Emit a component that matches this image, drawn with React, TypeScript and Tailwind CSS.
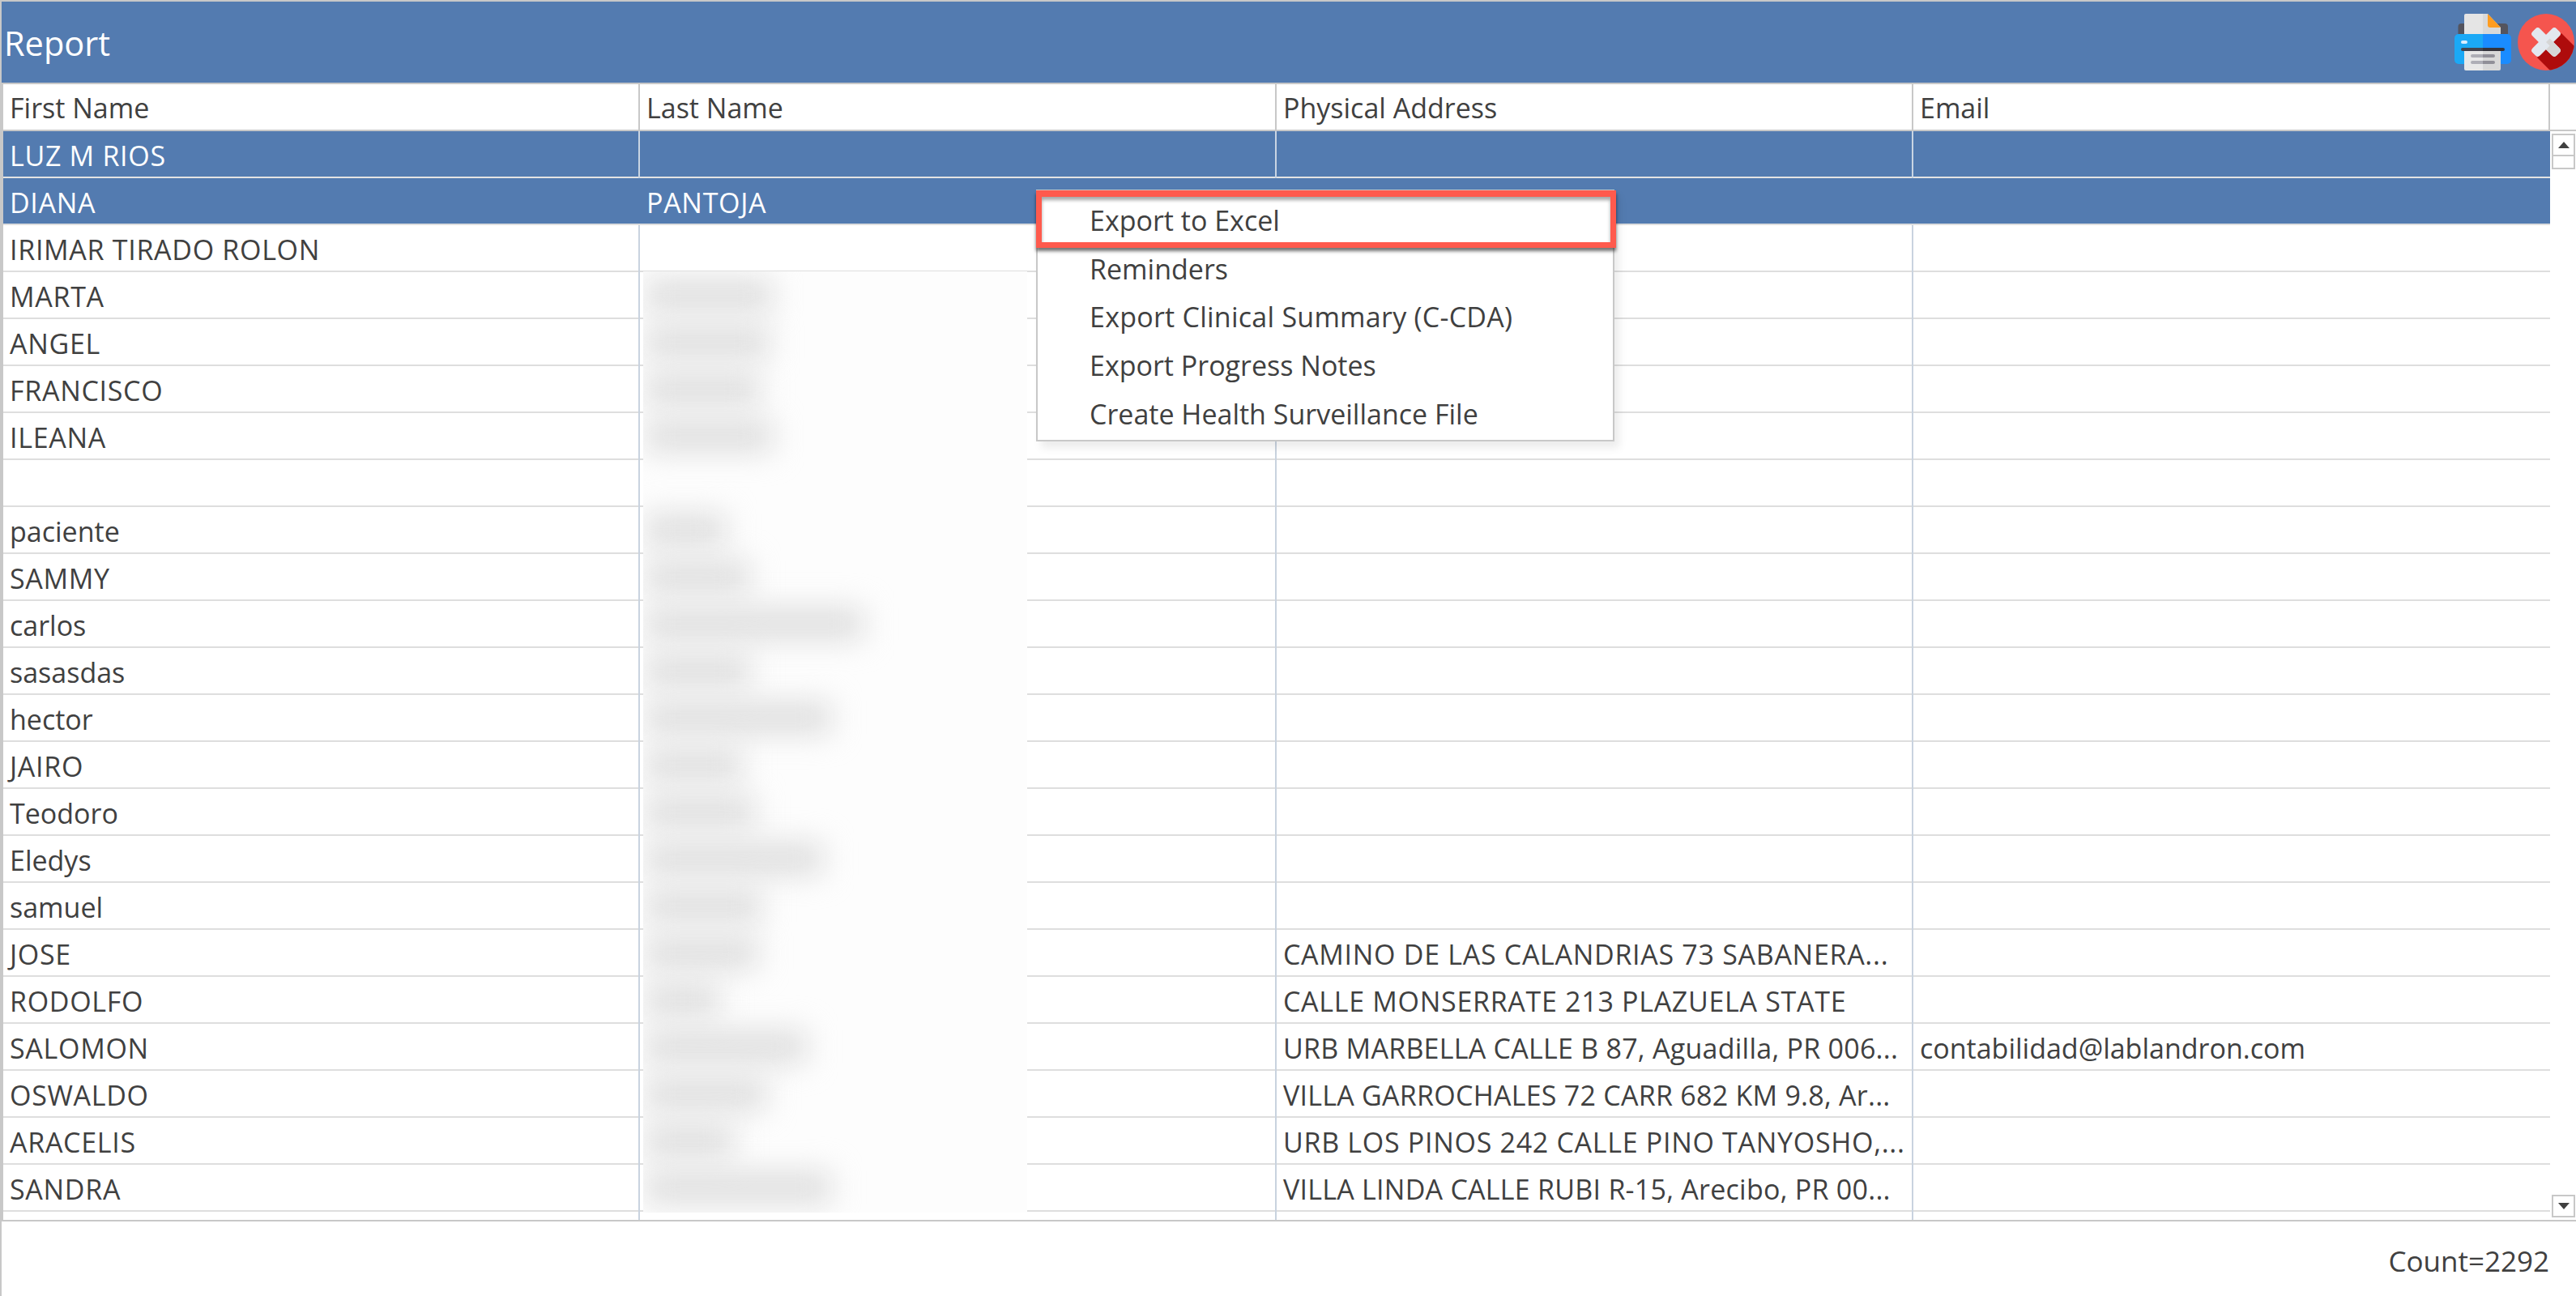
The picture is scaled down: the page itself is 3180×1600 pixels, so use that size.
const FONT = "font-['Open_Sans',sans-serif]"

const rows: [string, string, string, string][] = [
  ['LUZ M RIOS', '', '', ''],
  ['DIANA', 'PANTOJA', '', ''],
  ['IRIMAR TIRADO ROLON', '', '', ''],
  ['MARTA', '', '', ''],
  ['ANGEL', '', '', ''],
  ['FRANCISCO', '', '', ''],
  ['ILEANA', '', '', ''],
  ['', '', '', ''],
  ['paciente', '', '', ''],
  ['SAMMY', '', '', ''],
  ['carlos', '', '', ''],
  ['sasasdas', '', '', ''],
  ['hector', '', '', ''],
  ['JAIRO', '', '', ''],
  ['Teodoro', '', '', ''],
  ['Eledys', '', '', ''],
  ['samuel', '', '', ''],
  ['JOSE', '', 'CAMINO DE LAS CALANDRIAS 73 SABANERA...', ''],
  ['RODOLFO', '', 'CALLE MONSERRATE 213 PLAZUELA STATE', ''],
  ['SALOMON', '', 'URB MARBELLA CALLE B 87, Aguadilla, PR 006...', 'contabilidad@lablandron.com'],
  ['OSWALDO', '', 'VILLA GARROCHALES 72 CARR 682 KM 9.8, Ar...', ''],
  ['ARACELIS', '', 'URB LOS PINOS 242 CALLE PINO TANYOSHO,...', ''],
  ['SANDRA', '', 'VILLA LINDA CALLE RUBI R-15, Arecibo, PR 00...', ''],
  ['', '', '', ''],
]

// widths of the redacted last names, from MARTA down
const blurred = [150, 146, 134, 150, 0, 92, 122, 262, 122, 222, 112, 128, 212, 136, 132, 84, 192, 142, 102, 222]

function PrinterIcon() {
  return (
    <svg width="70" height="70" viewBox="0 0 70 70">
      <rect x="4.5" y="12" width="61.5" height="20" rx="4" fill="#54545e" />
      <path d="M12 2a2 2 0 0 1 2-2h21v26H12z" fill="#e5e5e5" />
      <path d="M35 0h6l16 17v9H35z" fill="#d9d9d9" />
      <path d="M41 0l16 17H44a3 3 0 0 1-3-3z" fill="#ff9c1f" />
      <path d="M5 25h30v37H5a5 5 0 0 1-5-5V30a5 5 0 0 1 5-5z" fill="#1ba9f6" />
      <path d="M35 25h30a5 5 0 0 1 5 5v27a5 5 0 0 1-5 5H35z" fill="#1a8cff" />
      <rect x="8" y="33" width="8" height="4" rx="2" fill="#d9edff" />
      <path d="M12 44h23v26H14a2 2 0 0 1-2-2z" fill="#e8e8e8" />
      <path d="M35 44h22v24a2 2 0 0 1-2 2H35z" fill="#d8d8d8" />
      <path d="M10 42h25v4H10a2 2 0 0 1 0-4z" fill="#43444f" />
      <path d="M35 42h25a2 2 0 0 1 0 4H35z" fill="#34343c" />
      <path d="M22 50h13v4H22a2 2 0 0 1 0-4zM22 58h13v4H22a2 2 0 0 1 0-4z" fill="#aeaeb6" />
      <path d="M35 50h13a2 2 0 0 1 0 4H35zM35 58h13a2 2 0 0 1 0 4H35z" fill="#908f98" />
    </svg>
  )
}

function CloseIcon() {
  return (
    <svg width="70" height="70" viewBox="0 0 70 70">
      <defs>
        <clipPath id="disc">
          <circle cx="35" cy="35" r="35" />
        </clipPath>
      </defs>
      <circle cx="35" cy="35" r="35" fill="#f5554e" />
      <path d="M54 24l27 27v30H51L24 54z" fill="#ae0c0c" clipPath="url(#disc)" />
      <g transform="rotate(45 35 35)">
        <rect x="14" y="28.5" width="42" height="13" rx="4" fill="#e3e8ef" />
        <rect x="28.5" y="14" width="13" height="42" rx="4" fill="#e3e8ef" />
        <path d="M35 28.5h17a4 4 0 0 1 4 4v5a4 4 0 0 1-4 4H41.5v-6.5H35z" fill="#d6d6d6" />
      </g>
    </svg>
  )
}

function ScrollButton({ down }: { down?: boolean }) {
  return (
    <div className="h-[28px] border-2 border-[#c8c8c8] flex items-center justify-center">
      <svg width="14" height="8" viewBox="0 0 14 8">
        <path d={down ? 'M0 0h14L7 8z' : 'M7 0l7 8H0z'} fill="#404040" />
      </svg>
    </div>
  )
}

function ContextMenu() {
  const items = ['Export to Excel', 'Reminders', 'Export Clinical Summary (C-CDA)', 'Export Progress Notes', 'Create Health Surveillance File']
  return (
    <div className="absolute left-[1277px] top-[232px] w-[714px] h-[311px] bg-white border-2 border-[#c8c8c8] pt-[7px] shadow-[6px_8px_10px_rgba(0,0,0,0.08)]">
      <div className="absolute -left-[2px] top-[-1px] w-[716px] h-[71px] border-x-[7px] border-t-[8px] border-b-[7px] border-[#ff5a4d] shadow-[0_4px_4px_rgba(0,0,0,0.55),inset_0_4px_4px_rgba(0,0,0,0.35)]" />
      {items.map(item => (
        <div key={item} className={`relative h-[59.6px] pl-[64px] flex items-center text-[34px] text-[#404040] ${item.includes('C-CDA') ? 'tracking-[0.25px]' : ''}`}>
          {item}
        </div>
      ))}
    </div>
  )
}

function BlurPatch() {
  return (
    <div className="absolute left-[792px] top-[333px] w-[474px] h-[1162px] bg-[#fdfdfd] overflow-hidden flex flex-col">
      {blurred.map((w, i) => (
        <div key={i} className="h-[58px] shrink-0 pl-[2px] flex items-center">
          <div className="h-[40px] bg-[#dedede] blur-[18px]" style={{ width: w ? w + 8 : 0 }} />
        </div>
      ))}
    </div>
  )
}

export default function App() {
  return (
    <div className={`relative w-[3180px] h-[1600px] overflow-hidden bg-white border-t-2 border-l-2 border-[#c8c8c8] flex flex-col text-[#404040] ${FONT}`}>
      <div className="h-[100px] shrink-0 bg-[#537bb0] flex items-center justify-between pr-[2px]">
        <span className="pl-[3px] pt-[2px] text-[41.5px] text-white">Report</span>
        <div className="flex items-center gap-[8px]">
          <PrinterIcon />
          <CloseIcon />
        </div>
      </div>

      <div className="h-[60px] shrink-0 border-y-2 border-[#c8c8c8] flex items-center text-[34px]">
        <div className="w-[2px] h-full bg-[#c8c8c8]" />
        {['First Name', 'Last Name', 'Physical Address', 'Email'].map(h => (
          <div key={h} className="w-[786px] h-full pl-[8px] pt-[3px] flex items-center border-r-2 border-[#c8c8c8]">{h}</div>
        ))}
      </div>

      <div className="h-[1346px] shrink-0 border-b-2 border-[#c8c8c8] flex">
        <div className="w-[2px] bg-[#c8c8c8]" />
        <div className="w-[3144px] overflow-hidden text-[34px]">
          {rows.map((r, i) => (
            <div key={i} className={`h-[58px] flex border-b-2 ${i === 0 ? 'bg-[#537bb0] text-white border-[#e3e3e3]' : i === 1 ? 'bg-[#537bb0] text-white border-[#dedede]' : 'border-[#dedede]'}`}>
              {r.map((cell, j) => (
                <div key={j} className={`w-[786px] h-[58px] pl-[8px] pt-[2px] flex items-center whitespace-nowrap ${j === 3 ? '' : 'border-r-2'} ${cell && cell === cell.toUpperCase() ? 'tracking-[0.7px]' : j === 2 ? 'tracking-[0.25px]' : ''} ${i === 1 ? 'border-transparent' : i === 0 ? 'border-[#c9d5e3]' : 'border-[#c9d3df]'}`}>
                  {cell}
                </div>
              ))}
            </div>
          ))}
        </div>
        <div className="ml-[2px] w-[29px] py-[3px] flex flex-col">
          <ScrollButton />
          <div className="h-[16px] border-2 border-t-0 border-[#c8c8c8]" />
          <div className="flex-1" />
          <ScrollButton down />
        </div>
      </div>

      <div className="flex-1 flex items-center justify-end pr-[33px] pt-[6px] text-[35px]">Count=2292</div>

      <BlurPatch />
      <ContextMenu />
    </div>
  )
}
